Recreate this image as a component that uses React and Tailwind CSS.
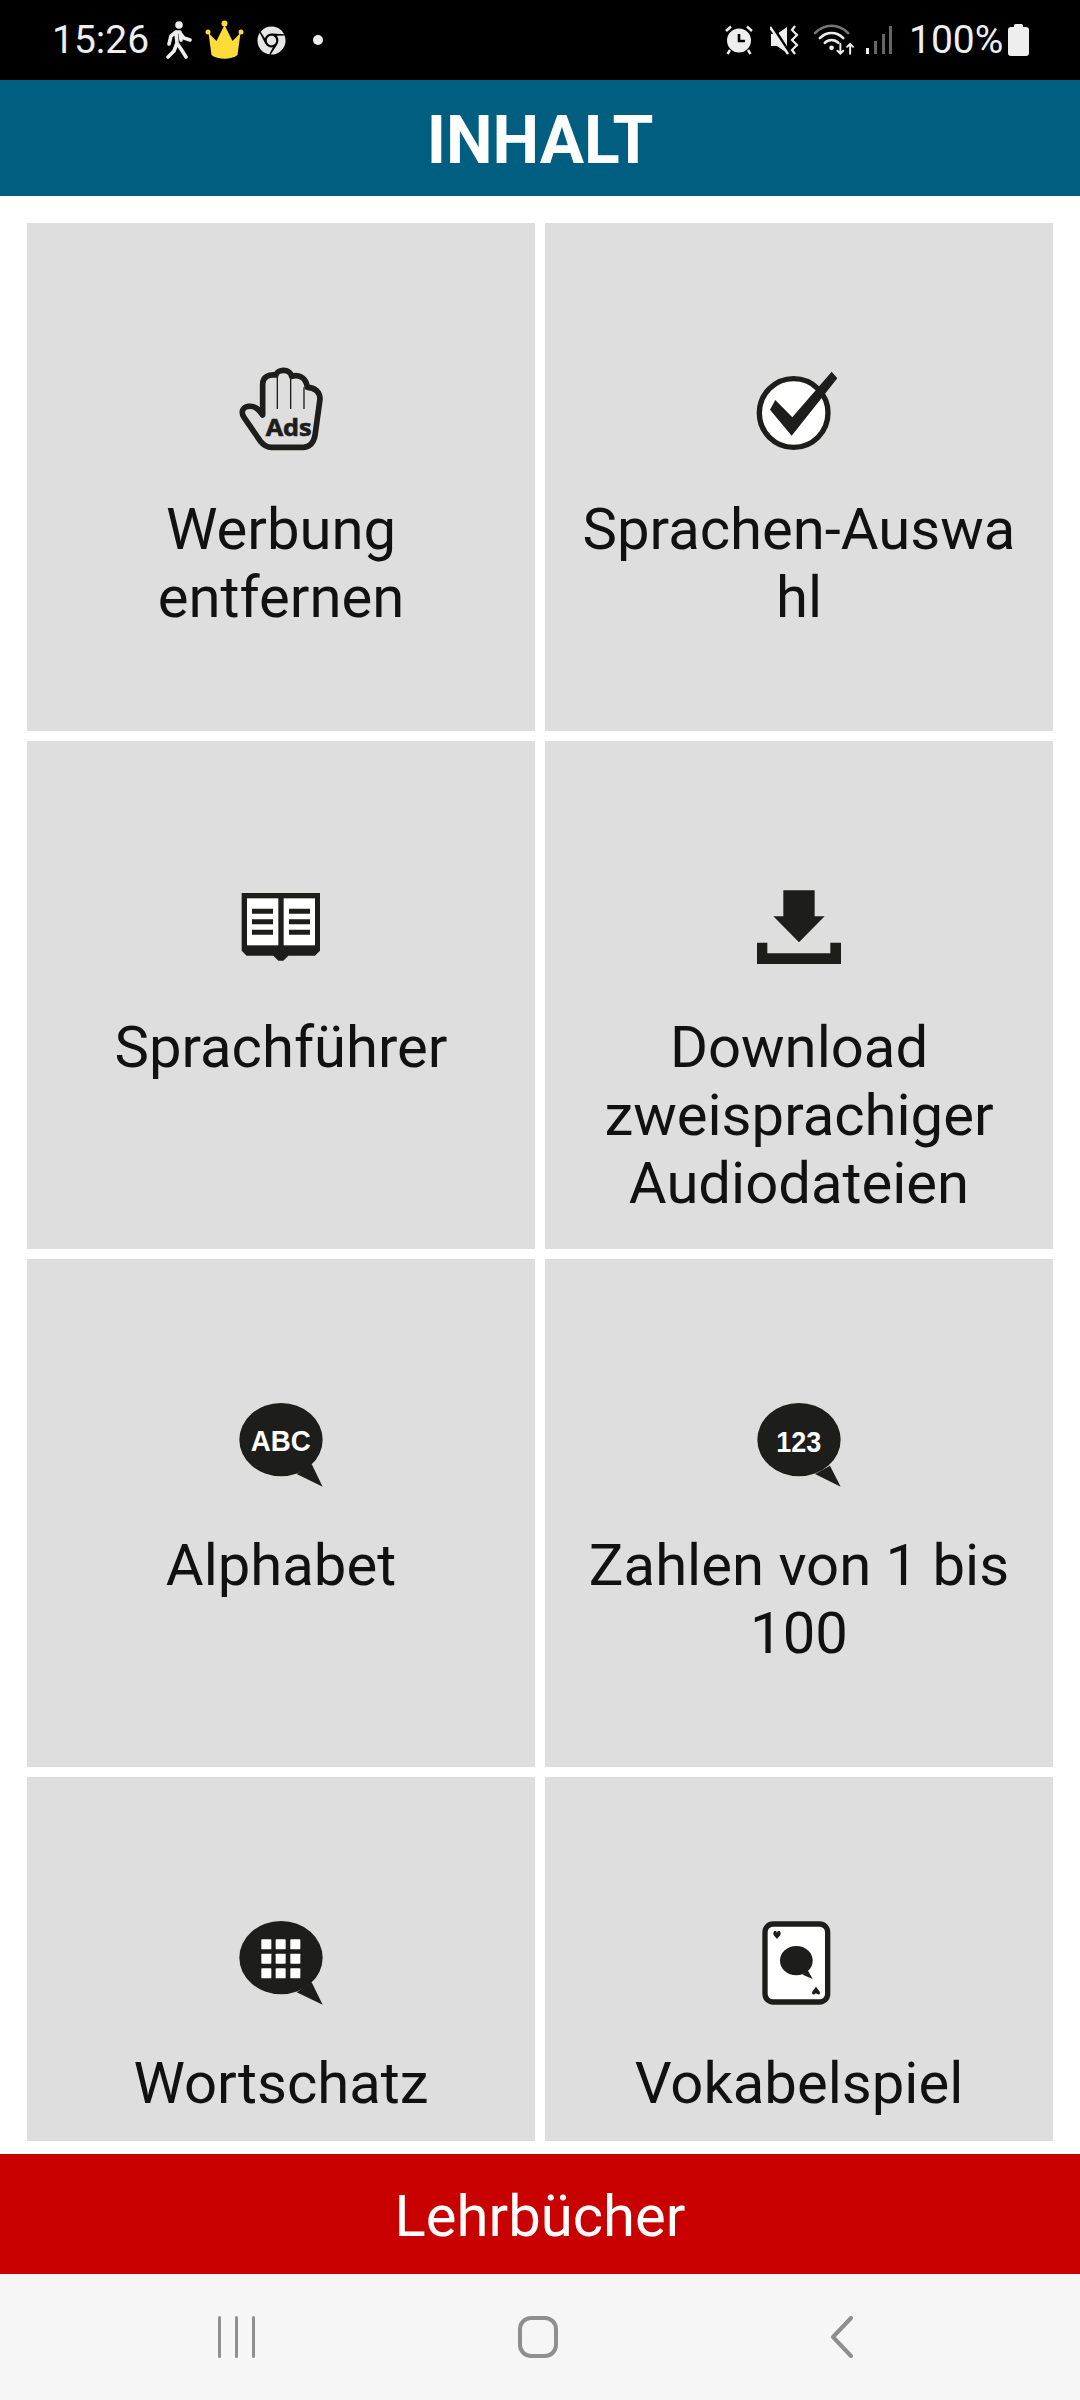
import { FaChrome } from "react-icons/fa";

const INK = "#1d1d1b";

// the icons are traced from the crops, so each one keeps its own offset
const IconBox = ({ transform, children }) => (
  <svg viewBox="0 0 90 90" className="w-[90px] h-[90px] block">
    <g transform={transform}>{children}</g>
  </svg>
);

const AdsIcon = () => (
  <IconBox transform="translate(-36,-26) scale(0.3333)">
    <path
      d="M215 325 C200 325 190 318 180 305 L132 235 C122 220 127 205 145 202 C165 200 175 210 188 228 L188 135 C188 115 205 105 228 108 C232 90 270 88 275 112 C295 105 318 115 322 145 C345 145 360 160 360 180 L345 290 C340 315 325 325 310 325 Z"
      fill="none"
      stroke={INK}
      strokeWidth="17"
      strokeLinejoin="round"
    />
    <path d="M232 112 V210 M272 112 V210 M312 145 V210" stroke={INK} strokeWidth="4" fill="none" />
    <text x="266" y="290" textAnchor="middle" textLength="138" lengthAdjust="spacingAndGlyphs" fontFamily="'Open Sans', sans-serif" fontWeight="700" fontSize="72" fill={INK} stroke={INK} strokeWidth="2">Ads</text>
  </IconBox>
);

const CheckIcon = () => (
  <IconBox transform="translate(-34,-16) scale(0.3333)">
    <circle cx="221" cy="192" r="103" fill="#fff" stroke={INK} strokeWidth="16" />
    <polygon points="150,182 166,153 217,205 335,68 352,88 215,260" fill={INK} />
  </IconBox>
);

const BookIcon = () => (
  <IconBox transform="translate(-16,-14) scale(0.3333)">
    <polygon points="65,72 300,72 300,245 285,260 205,260 190,275 175,275 160,260 80,260 65,245" fill={INK} />
    <rect x="81" y="88" width="94" height="141" fill="#fff" />
    <rect x="191" y="88" width="94" height="141" fill="#fff" />
    <path d="M96 127 H159 M96 158 H159 M96 190 H159 M207 127 H270 M207 158 H270 M207 190 H270" stroke={INK} strokeWidth="15" />
  </IconBox>
);

const DownloadIcon = () => (
  <IconBox transform="translate(-14,-14) scale(0.3333)">
    <polygon points="130,64 224,64 224,142 254,142 177,220 100,142 130,142" fill={INK} />
    <polygon points="51,221 82,221 82,253 271,253 271,221 303,221 303,285 51,285" fill={INK} />
  </IconBox>
);

const AbcIcon = () => (
  <IconBox transform="translate(-16,-12) scale(0.3333)">
    <ellipse cx="183" cy="152" rx="125" ry="110" fill={INK} />
    <polygon points="275,225 308,293 230,255" fill={INK} />
    <text x="182" y="187" textAnchor="middle" textLength="180" lengthAdjust="spacingAndGlyphs" fontFamily="'Liberation Sans', sans-serif" fontWeight="700" fontSize="90" fill="#fff">ABC</text>
  </IconBox>
);

const NumIcon = () => (
  <IconBox transform="translate(-14,-12) scale(0.3333)">
    <ellipse cx="177" cy="152" rx="125" ry="110" fill={INK} />
    <polygon points="270,230 302,293 225,255" fill={INK} />
    <text x="176" y="188" textAnchor="middle" textLength="135" lengthAdjust="spacingAndGlyphs" fontFamily="'Liberation Sans', sans-serif" fontWeight="700" fontSize="90" fill="#fff">123</text>
  </IconBox>
);

const GridIcon = () => (
  <IconBox transform="translate(-16,-10) scale(0.3333)">
    <ellipse cx="183" cy="146" rx="125" ry="110" fill={INK} />
    <polygon points="275,220 308,287 230,250" fill={INK} />
    {[124, 167, 211].map((x) =>
      [91, 134, 178].map((y) => <rect key={`${x}-${y}`} x={x} y={y} width="30" height="30" rx="2" fill="#fff" />)
    )}
  </IconBox>
);

const CardIcon = () => (
  <IconBox transform="translate(-14,-10) scale(0.3333)">
    <rect x="75" y="45" width="188" height="234" rx="24" fill="#fff" stroke={INK} strokeWidth="16" />
    <path d="M100 74 C100 62 110 64 111 72 C112 64 122 62 122 74 C122 80 114 85 111 90 C108 85 100 80 100 74 Z" fill={INK} />
    <path d="M228 233 C222 242 216 245 216 251 C216 258 224 258 228 252 C232 258 240 258 240 251 C240 245 234 242 228 233 Z" fill={INK} />
    <ellipse cx="169" cy="155" rx="49" ry="44" fill={INK} />
    <polygon points="203,183 218,210 188,197" fill={INK} />
  </IconBox>
);

const items = [
  { icon: AdsIcon, lines: ["Werbung", "entfernen"] },
  { icon: CheckIcon, lines: ["Sprachen-Auswa", "hl"] },
  { icon: BookIcon, lines: ["Sprachführer"] },
  { icon: DownloadIcon, lines: ["Download", "zweisprachiger", "Audiodateien"] },
  { icon: AbcIcon, lines: ["Alphabet"] },
  { icon: NumIcon, lines: ["Zahlen von 1 bis", "100"] },
  { icon: GridIcon, lines: ["Wortschatz"] },
  { icon: CardIcon, lines: ["Vokabelspiel"] },
];

const StatusLeft = () => (
  <div className="flex items-center">
    <span className="text-[39px] leading-none text-[#eeeeee] w-[93px]">15:26</span>
    {/* walker */}
    <svg viewBox="0 0 26 38" className="w-[26px] h-[38px] ml-[21px]" fill="none" stroke="#eeeeee" strokeWidth="3.6" strokeLinecap="round" strokeLinejoin="round">
      <circle cx="13" cy="4" r="3.8" fill="#eeeeee" stroke="none" />
      <path d="M10 11 L5 15 L3 23 M10 11 L14 11 L15 19 M10 11 L11 22 L15 28 L20 36 M11 22 L8 30 L2 36 M14 12 L18 17 L24 19" />
    </svg>
    {/* crown */}
    <svg viewBox="0 0 38 40" className="w-[39px] h-[40px] ml-[13px]" fill="#fddc3a">
      <circle cx="19" cy="3.5" r="3" />
      <circle cx="2.5" cy="12" r="2.5" />
      <circle cx="35.5" cy="12" r="2.5" />
      <path d="M19 5 L27 21 L35 13 L32 35 C26 40 12 40 6 35 L3 13 L11 21 Z" />
    </svg>
    <FaChrome className="w-[29px] h-[29px] ml-[13px] text-[#e6e6e6]" />
    <span className="w-[10px] h-[10px] rounded-full bg-[#eeeeee] ml-[27px]" />
  </div>
);

const StatusRight = () => (
  <div className="flex items-center">
    {/* alarm */}
    <svg viewBox="0 0 28 30" className="w-[28px] h-[30px]" fill="#eeeeee">
      <circle cx="14" cy="15.5" r="12" />
      <path d="M14 9 V16 H20" stroke="#000" strokeWidth="2.6" fill="none" />
      <path d="M1 6 L6 1.5 M27 6 L22 1.5 M5 25 L2.5 29 M23 25 L25.5 29" stroke="#eeeeee" strokeWidth="2.4" />
    </svg>
    {/* mute + vibrate */}
    <svg viewBox="0 0 30 30" className="w-[30px] h-[30px] ml-[17px]" fill="#eeeeee">
      <path d="M1 9 H7 L17 2 V28 L7 21 H1 Z" />
      <path d="M2 1 L20 29" stroke="#000" strokeWidth="3.4" />
      <path d="M0 2 L18 29" stroke="#eeeeee" strokeWidth="2.4" />
      <path d="M25 1 L22 5 L27 10 L22 15 L27 20 L22 25 L25 29" stroke="#eeeeee" strokeWidth="2.2" fill="none" />
    </svg>
    {/* wifi */}
    <svg viewBox="0 0 42 32" className="w-[41px] h-[32px] ml-[14px]" fill="none" strokeWidth="2.6" strokeLinecap="round">
      <path d="M1 9 C11 -1 25 -1 35 9" stroke="#777777" />
      <path d="M6 14 C13 7 23 7 30 14" stroke="#eeeeee" />
      <path d="M11 19 C15 15 21 15 25 19" stroke="#eeeeee" />
      <circle cx="18" cy="24" r="2.4" fill="#eeeeee" />
      <path d="M27 20 V30 M24 27 L27 30 L30 27" stroke="#eeeeee" strokeWidth="2" />
      <path d="M37 30 V20 M34 23 L37 20 L40 23" stroke="#eeeeee" strokeWidth="2" />
    </svg>
    {/* signal */}
    <svg viewBox="0 0 28 30" className="w-[28px] h-[30px] ml-[10px]">
      <rect x="1" y="23" width="3" height="6" fill="#eeeeee" />
      <rect x="9" y="16" width="3" height="13" fill="#666666" />
      <rect x="17" y="9" width="3" height="20" fill="#666666" />
      <rect x="24" y="1" width="3" height="28" fill="#666666" />
    </svg>
    <span className="text-[39px] leading-none text-[#eeeeee] w-[92px] ml-[16px]">100%</span>
    {/* battery */}
    <svg viewBox="0 0 21 32" className="w-[21px] h-[32px] ml-[7px]" fill="#eeeeee">
      <rect x="6" y="0" width="9" height="4" rx="1.5" />
      <rect x="0" y="3" width="21" height="29" rx="3" />
    </svg>
  </div>
);

const App = () => {
  return (
    <div className="w-[1080px] h-[2400px] flex flex-col bg-white font-['Roboto',sans-serif] overflow-hidden">
      <div className="h-[80px] bg-black flex items-center justify-between pl-[52px] pr-[51px]">
        <StatusLeft />
        <StatusRight />
      </div>

      <div className="h-[116px] bg-[#005f80] flex items-center justify-center pt-[6px]">
        <h1 className="text-[66px] font-bold text-white leading-none">INHALT</h1>
      </div>

      <div className="flex-1 min-h-0 pt-[27px] px-[27px] pb-[13px]">
        <div className="h-full overflow-hidden">
          <div className="grid grid-cols-2 gap-[10px]">
            {items.map((item) => {
              const Icon = item.icon;
              return (
                <div key={item.lines[0]} className="h-[508px] bg-[#dedede] flex flex-col items-center pt-[142px]">
                  <Icon />
                  <div className="mt-[40px] text-[58px] leading-[68px] text-[#111111] text-center whitespace-nowrap">
                    {item.lines.map((line) => (
                      <div key={line}>{line}</div>
                    ))}
                  </div>
                </div>
              );
            })}
          </div>
        </div>
      </div>

      <div className="h-[120px] bg-[#c80000] flex items-center justify-center pt-[3px]">
        <span className="text-[58px] text-white leading-none">Lehrbücher</span>
      </div>

      <div className="h-[126px] bg-[#f6f6f6] flex items-start pt-[42px] pl-[218px]">
        <div className="flex gap-[14px] h-[42px]">
          <span className="w-[3px] h-full rounded-full bg-[#8f8f8f]" />
          <span className="w-[3px] h-full rounded-full bg-[#8f8f8f]" />
          <span className="w-[3px] h-full rounded-full bg-[#8f8f8f]" />
        </div>
        <div className="w-[40px] h-[42px] ml-[263px] rounded-[13px] border-[4px] border-[#8f8f8f]" />
        <svg viewBox="0 0 22 42" className="w-[22px] h-[42px] ml-[273px]" fill="none" stroke="#8f8f8f" strokeWidth="4" strokeLinecap="round" strokeLinejoin="round">
          <path d="M20 2 L2 21 L20 40" />
        </svg>
      </div>
    </div>
  );
};

export default App;
